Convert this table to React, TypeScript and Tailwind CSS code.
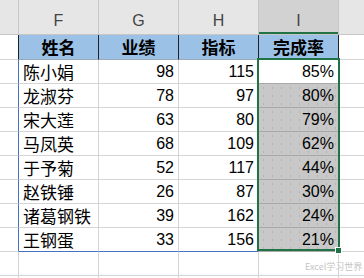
import React from 'react';

const data: [string, number, number, string][] = [
  ['陈小娟', 98, 115, '85%'],
  ['龙淑芬', 78, 97, '80%'],
  ['宋大莲', 63, 80, '79%'],
  ['马凤英', 68, 109, '62%'],
  ['于予菊', 52, 117, '44%'],
  ['赵铁锤', 26, 87, '30%'],
  ['诸葛钢铁', 39, 162, '24%'],
  ['王钢蛋', 33, 156, '21%'],
];

const cjk = "font-['Noto_Sans_CJK_SC','Noto_Sans',sans-serif]";
const num = "font-['Liberation_Sans',Arial,sans-serif]";
const grid = 'border-r border-b border-[#d4d4d4]';
const dots =
  'bg-[#c8c8c8] bg-[radial-gradient(circle,#b4b4b4_0.7px,transparent_0.9px)] bg-[length:9px_8px]';

export default function App() {
  return (
    <div className="relative w-[364px] h-[278px] overflow-hidden bg-white">
      <div className="grid grid-cols-[19px_80px_80px_80px_80px_1fr]">
        {/* column letters */}
        <div className="h-[35px] bg-[#e6e6e6] border-r border-b border-[#c6c6c6]" />
        {['F', 'G', 'H'].map((c) => (
          <div
            key={c}
            className={`h-[35px] bg-[#e6e6e6] border-r border-b border-[#c6c6c6] flex items-end justify-center pb-[5px] leading-none text-[16px] text-[#444] ${num}`}
          >
            {c}
          </div>
        ))}
        <div
          className={`h-[35px] bg-[#d2d2d2] border-r border-b border-[#c6c6c6] shadow-[inset_0_-2px_0_#217346] flex items-end justify-center pb-[5px] leading-none text-[16px] text-[#444] ${num}`}
        >
          I
        </div>
        <div className="h-[35px] bg-[#e6e6e6] border-b border-[#c6c6c6]" />

        {/* header row */}
        <div className="h-[25px] border-r border-b border-r-[#222] border-b-[#d4d4d4]" />
        {['姓名', '业绩', '指标', '完成率'].map((h) => (
          <div
            key={h}
            className={`h-[25px] bg-[#9bc2e6] border-r border-b border-r-[#222] border-b-[#9aaabb] flex items-center justify-center font-bold text-[17px] text-black ${cjk}`}
          >
            {h}
          </div>
        ))}
        <div className={`h-[25px] border-b border-[#d4d4d4]`} />

        {/* data rows */}
        {data.map(([name, a, b, p], i) => {
          const last = i === data.length - 1;
          const bottom = last ? 'border-b-[#4472c4]' : '';
          return (
            <React.Fragment key={name}>
              <div className={`h-[24px] ${grid} border-r-[#4472c4]`} />
              <div
                className={`h-[24px] ${grid} ${bottom} flex items-center pl-[4px] text-[17px] text-black ${cjk}`}
              >
                {name}
              </div>
              <div
                className={`h-[24px] ${grid} ${bottom} flex items-center justify-end pr-[4px] text-[16px] text-black ${num}`}
              >
                {a}
              </div>
              <div
                className={`h-[24px] ${grid} ${bottom} flex items-center justify-end pr-[4px] text-[16px] text-black ${num}`}
              >
                {b}
              </div>
              <div
                className={`h-[24px] border-r border-b border-[#a8a8a8] ${
                  i === 0 ? 'bg-white' : dots
                } flex items-center justify-end pr-[4px] text-[16px] text-black ${num}`}
              >
                {p}
              </div>
              <div className="h-[24px] border-b border-[#d4d4d4]" />
            </React.Fragment>
          );
        })}

        {/* empty rows below */}
        {[0, 1].map((r) => (
          <React.Fragment key={r}>
            <div className={`h-[24px] ${grid}`} />
            <div className={`h-[24px] ${grid}`} />
            <div className={`h-[24px] ${grid}`} />
            <div className={`h-[24px] ${grid}`} />
            <div className={`h-[24px] ${grid}`} />
            <div className="h-[24px] border-b border-[#d4d4d4]" />
          </React.Fragment>
        ))}
      </div>

      {/* selection border */}
      <div className="absolute left-[257px] top-[58px] w-[83px] h-[193px] border-2 border-[#217346] pointer-events-none" />
      {/* fill handle */}
      <div className="absolute left-[335px] top-[247px] w-[7px] h-[7px] bg-[#217346] border border-white" />

      {/* watermark */}
      <div
        className={`absolute left-[305px] top-[262px] whitespace-nowrap text-[9px] leading-none text-[#c4c4c4] [text-shadow:0_0_1px_#fff] ${cjk}`}
      >
        Excel学习世界
      </div>
    </div>
  );
}
